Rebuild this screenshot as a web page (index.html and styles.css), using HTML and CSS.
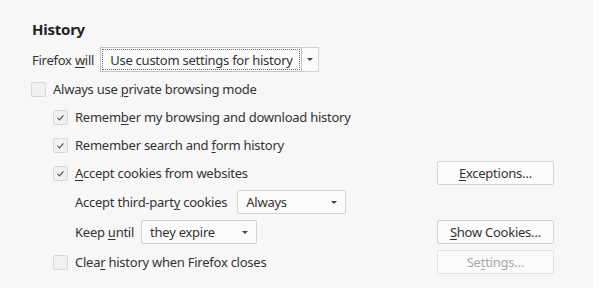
FILE: index.html
```html
<!DOCTYPE html>
<html>
<head>
    <title>History</title>
    <link rel="stylesheet" href="styles.css">
</head>
<body>
    <div class="panel">
        <h2 class="panel-title">History</h2>

        <div class="mode-row">
            <span class="label">Firefox <u>w</u>ill</span>
            <div class="combo">
                <div class="combo-value"><span class="focus-ring">Use custom settings for history</span></div>
                <div class="combo-arrow"><span class="arrow"></span></div>
            </div>
        </div>

        <div class="row">
            <span class="checkbox"></span>
            <span class="label">Always use <u>p</u>rivate browsing mode</span>
        </div>

        <div class="nested">
            <div class="row">
                <span class="checkbox checked"><svg viewBox="0 0 15 15" width="15" height="15"><polyline points="4.5,7.8 6.6,9.9 10.4,5.3" /></svg></span>
                <span class="label">Remem<u>b</u>er my browsing and download history</span>
            </div>
            <div class="row">
                <span class="checkbox checked"><svg viewBox="0 0 15 15" width="15" height="15"><polyline points="4.5,7.8 6.6,9.9 10.4,5.3" /></svg></span>
                <span class="label">Remember search and <u>f</u>orm history</span>
            </div>
            <div class="row">
                <span class="checkbox checked"><svg viewBox="0 0 15 15" width="15" height="15"><polyline points="4.5,7.8 6.6,9.9 10.4,5.3" /></svg></span>
                <span class="label"><u>A</u>ccept cookies from websites</span>
                <button class="side-button"><u>E</u>xceptions…</button>
            </div>
            <div class="row tall sub">
                <span class="label">Accept third-part<u>y</u> cookies</span>
                <div class="select select-third">
                    <span>Always</span>
                    <span class="arrow"></span>
                </div>
            </div>
            <div class="row tall sub">
                <span class="label">Keep <u>u</u>ntil</span>
                <div class="select select-keep">
                    <span>they expire</span>
                    <span class="arrow"></span>
                </div>
                <button class="side-button"><u>S</u>how Cookies…</button>
            </div>
            <div class="row tall">
                <span class="checkbox"></span>
                <span class="label">Clea<u>r</u> history when Firefox closes</span>
                <button class="side-button" disabled>Se<u>t</u>tings…</button>
            </div>
        </div>
    </div>
</body>
</html>
```

FILE: styles.css
```css
body {
    margin: 0;
    background: #ffffff;
    font-family: "Noto Sans", "Open Sans", sans-serif;
    font-size: 13px;
    letter-spacing: -0.25px;
    color: #333333;
}

.panel {
    width: 562px;
    height: 270px;
    padding: 18px 0 0 31px;
    background: #f7f7f8;
}

.panel-title {
    margin: 0 0 7px 1px;
    font-size: 15px;
    line-height: 22px;
    font-weight: bold;
    color: #222222;
}

u {
    text-decoration-thickness: 1px;
    text-underline-offset: 2px;
}

.mode-row {
    display: flex;
    align-items: center;
    height: 25px;
    margin-bottom: 3px;
    padding-left: 1px;
}

.mode-row .label {
    margin-right: 6px;
}

.combo {
    display: flex;
    height: 25px;
}

.combo-value {
    width: 202px;
    border: 1px solid #c4c4c4;
    background: #fbfbfb;
    padding: 1px;
    box-sizing: border-box;
}

.focus-ring {
    display: block;
    height: 100%;
    box-sizing: border-box;
    border: 1px dotted #6a6a6a;
    padding-left: 7px;
    line-height: 20px;
    white-space: nowrap;
}

.combo-arrow {
    width: 17px;
    border: 1px solid #d4d4d4;
    border-left: none;
    background: #fbfbfb;
    display: flex;
    align-items: center;
    justify-content: center;
    box-sizing: border-box;
}

.arrow {
    width: 0;
    height: 0;
    border-left: 3px solid transparent;
    border-right: 3px solid transparent;
    border-top: 3px solid #444444;
}

.row {
    display: flex;
    align-items: center;
    height: 28px;
    white-space: nowrap;
}

.row.tall {
    height: 30px;
}

.nested {
    padding-left: 22px;
    width: 501px;
}

.sub {
    padding-left: 22px;
}

.checkbox {
    width: 15px;
    height: 15px;
    box-sizing: border-box;
    border: 1px solid #d8d8d8;
    border-radius: 2px;
    background: #f1f1f1;
    margin-right: 7px;
    flex-shrink: 0;
}

.checkbox svg {
    display: block;
    margin: -1px;
    fill: none;
    stroke: #555555;
    stroke-width: 1.2;
}

.select {
    display: flex;
    align-items: center;
    justify-content: space-between;
    height: 24px;
    box-sizing: border-box;
    border: 1px solid #d4d4d4;
    border-radius: 2px;
    background: #fbfbfb;
    margin-left: 7px;
    padding: 0 8px 0 8px;
}

.select-third {
    width: 109px;
    margin-left: 10px;
}

.select-keep {
    width: 116px;
}

.side-button {
    margin-left: auto;
    width: 117px;
    height: 24px;
    border: 1px solid #d4d4d4;
    border-radius: 2px;
    background: #fbfbfb;
    font-family: inherit;
    font-size: 13px;
    letter-spacing: inherit;
    color: #333333;
    padding: 0;
}

.side-button:disabled {
    color: #a8a8a8;
    border-color: #e2e2e2;
}
```
